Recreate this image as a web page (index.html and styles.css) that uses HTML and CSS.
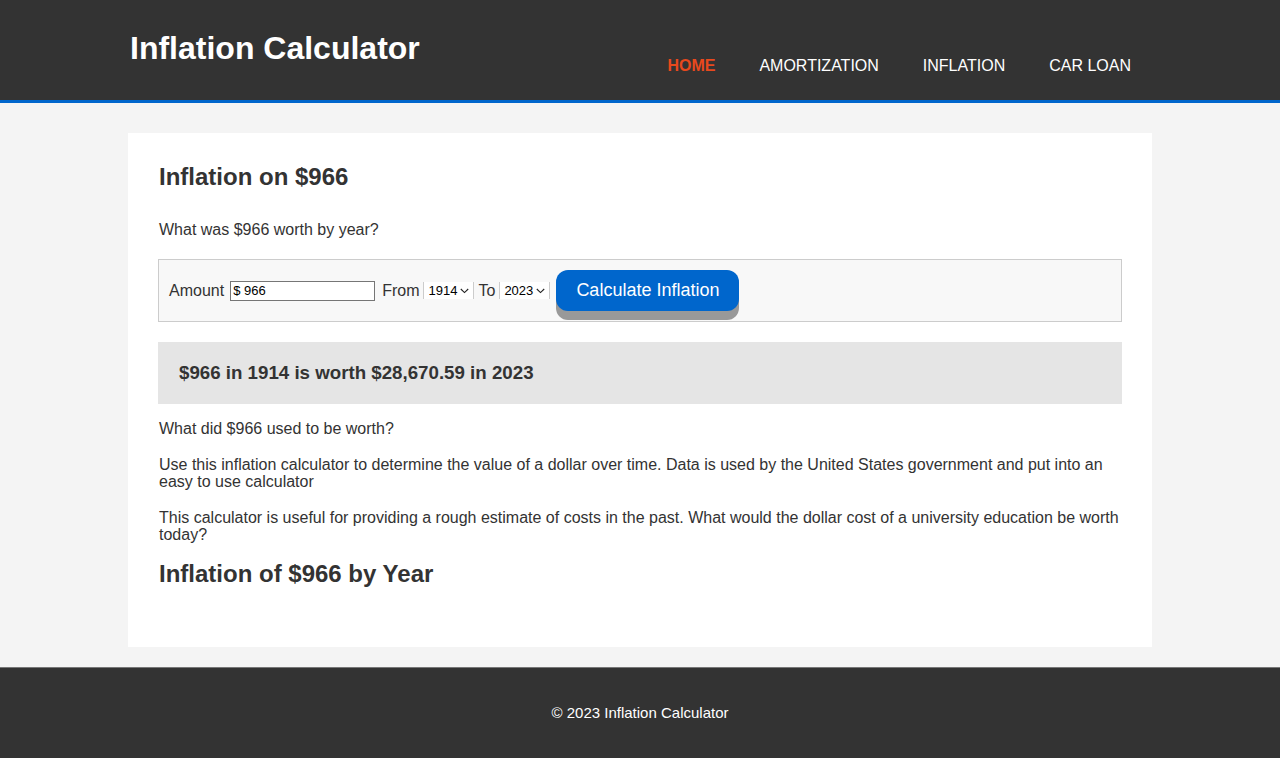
FILE: index.html
```html
<!DOCTYPE html>
<html lang="en">
<head>
<meta charset="utf-8">
<title>Inflation Calculator</title>
<link rel="stylesheet" href="styles.css">
</head>
<body>
<header class="site-header">
  <div class="container header-inner">
    <h1 class="logo">Inflation Calculator</h1>
    <nav class="nav">
      <a class="nav-link current" href="#">HOME</a>
      <a class="nav-link" href="#">AMORTIZATION</a>
      <a class="nav-link" href="#">INFLATION</a>
      <a class="nav-link" href="#">CAR LOAN</a>
    </nav>
  </div>
</header>

<main class="container card">
  <h2 class="title">Inflation on $966</h2>
  <p class="lead">What was $966 worth by year?</p>

  <form class="calc-form">
    <label class="field-label" for="amount">Amount</label>
    <input class="amount" id="amount" type="text" value="$ 966">
    <label class="field-label" for="from">From</label>
    <select class="year" id="from"><option>1914</option></select>
    <label class="field-label" for="to">To</label>
    <select class="year" id="to"><option>2023</option></select>
    <button class="calc-btn" type="button">Calculate Inflation</button>
  </form>

  <div class="result">
    <h3 class="result-text">$966 in 1914 is worth $28,670.59 in 2023</h3>
  </div>

  <p class="after-result">What did $966 used to be worth?</p>
  <p>Use this inflation calculator to determine the value of a dollar over time. Data is used by the United States government and put into an easy to use calculator</p>
  <p class="last-para">This calculator is useful for providing a rough estimate of costs in the past. What would the dollar cost of a university education be worth today?</p>
  <h2 class="title title-sub">Inflation of $966 by Year</h2>
</main>

<footer class="site-footer">
  <p class="copy">&copy; 2023 Inflation Calculator</p>
</footer>
</body>
</html>
```

FILE: styles.css
```css
* { box-sizing: border-box; }

body {
  margin: 0;
  background: #f4f4f4;
  color: #333;
  font-family: "Liberation Sans", Arial, Helvetica, sans-serif;
  font-size: 16px;
}

.container {
  width: 1024px;
  margin-left: auto;
  margin-right: auto;
}

.site-header {
  background: #333;
  height: 103px;
  border-bottom: 3px solid #0066cc;
}

.header-inner {
  display: flex;
  justify-content: space-between;
  align-items: flex-start;
}

.logo {
  margin: 0;
  padding-top: 30px;
  padding-left: 2px;
  font-size: 32px;
  font-weight: bold;
  color: #fff;
  line-height: normal;
}

.nav {
  display: flex;
  margin-top: 57px;
}

.nav-link {
  color: #fff;
  text-decoration: none;
  font-size: 16px;
  padding: 0 22px;
  line-height: normal;
}

.nav-link:last-child { padding-right: 21px; }

.nav-link.current {
  color: #e8491d;
  font-weight: bold;
}

.card {
  background: #fff;
  margin-top: 30px;
  margin-bottom: 20px;
  padding: 30px 30px 30px 31px;
}

.title {
  font-size: 24px;
  font-weight: bold;
  margin: 0 0 30px;
  line-height: normal;
}

.title-sub {
  margin-top: 0;
  margin-bottom: 29px;
}

.card p {
  line-height: 17px;
  margin: 19px 0;
}

.card .lead { margin: 0 0 21px; }

.card .after-result { margin-top: 16px; }

.card .last-para { margin-bottom: 17px; }

.calc-form {
  display: flex;
  align-items: center;
  gap: 4px;
  background: #f8f8f8;
  border: 1px solid #ccc;
  padding: 10px;
  margin-left: -1px;
}

.field-label { font-size: 16px; }

.amount {
  width: 145px;
  height: 20px;
  font-family: "Liberation Sans", Arial, sans-serif;
  font-size: 13px;
  padding: 1px 2px;
  border: 1px solid #767676;
  margin-left: 2px;
  margin-right: 3px;
}

.year {
  -webkit-appearance: none;
  appearance: none;
  width: 51px;
  font-family: "Liberation Sans", Arial, sans-serif;
  font-size: 13px;
  height: 17px;
  padding: 0 0 0 4px;
  border: none;
  border-left: 1px solid #ccc;
  border-right: 1px solid #ccc;
  background: #fff url("data:image/svg+xml;utf8,<svg xmlns='http://www.w3.org/2000/svg' width='9' height='6' viewBox='0 0 9 6'><path d='M0.8 1 L4.5 4.6 L8.2 1' fill='none' stroke='%23222' stroke-width='1.1'/></svg>") no-repeat right 4px center;
  color: #000;
}

.calc-btn {
  margin-left: 2px;
  height: 41px;
  padding: 0 20px;
  border: none;
  border-radius: 12px;
  background: #0066cc;
  color: #fff;
  font-family: "Liberation Sans", Arial, sans-serif;
  font-size: 18px;
  box-shadow: 0 9px 0 #999;
}

.result {
  background: #e5e5e5;
  margin-top: 20px;
  margin-left: -1px;
  padding: 20px 20px 20px 21px;
}

.result-text {
  margin: 0;
  font-size: 18.72px;
  font-weight: bold;
  line-height: normal;
}

.site-footer {
  background: #333;
  border-top: 1px solid #777;
  padding: 36px 0 45px;
  text-align: center;
  color: #fff;
}

.copy {
  margin: 0;
  font-size: 15px;
  line-height: normal;
}
```
